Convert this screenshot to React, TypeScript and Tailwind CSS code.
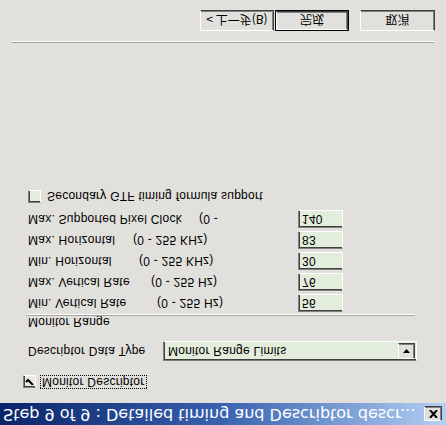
import React from 'react';

const raised =
  'border border-t-white border-l-white border-r-[#404040] border-b-[#404040] shadow-[inset_-1px_-1px_0_#808080]';
const sunken =
  'border border-t-[#808080] border-l-[#808080] border-r-white border-b-white shadow-[inset_1px_1px_0_#404040]';

const rows = [
  { name: 'Min. Vertical Rate', range: '(0 - 255 Hz)', nameW: 'w-[129px]', value: '56' },
  { name: 'Max. Vertical Rate', range: '(0 - 255 Hz)', nameW: 'w-[123px]', value: '76' },
  { name: 'Min. Horizontal', range: '(0 - 255 KHz)', nameW: 'w-[111px]', value: '30' },
  { name: 'Max. Horizontal', range: '(0 - 255 KHz)', nameW: 'w-[105px]', value: '83' },
  { name: 'Max. Supported Pixel Clock', range: '(0 -', nameW: 'w-[171px]', value: '140' },
];

function CheckMark() {
  return (
    <svg width="9" height="7" viewBox="0 0 9 7">
      <path d="M1 3 L3 5 L8 0" stroke="#000" strokeWidth="2" fill="none" />
    </svg>
  );
}

export default function App() {
  // the reference is shown mirrored top-to-bottom, so the whole dialog is flipped
  return (
    <div className="w-[446px] h-[425px] overflow-hidden bg-[#e2e0dc] -scale-y-100 flex flex-col font-['Liberation_Sans',sans-serif] text-[12px] tracking-[0.25px] text-black">
      {/* title bar */}
      <div className="h-[22px] shrink-0 flex items-center bg-linear-to-r from-[#0a246a] via-[#3a62b0] to-[#b4d0f2]">
        <span className="pl-[3px] text-white font-['DejaVu_Sans',sans-serif] text-[16px] tracking-normal leading-none whitespace-nowrap">
          Step 9 of 9 : Detailed timing and Descriptor descr...
        </span>
        <button className={`ml-auto mr-[4px] w-[18px] h-[15px] bg-[#e2e0dc] flex items-center justify-center ${raised}`}>
          <svg width="9" height="8" viewBox="0 0 9 8">
            <path d="M1 0 L8 8 M8 0 L1 8" stroke="#000" strokeWidth="2" />
          </svg>
        </button>
      </div>

      {/* Monitor Descriptor checkbox */}
      <div className="mt-[14px] h-[14px] flex items-center pl-[23px]">
        <div className={`w-[13px] h-[13px] bg-[#eceae6] flex items-center justify-center ${sunken}`}>
          <CheckMark />
        </div>
        <span className="ml-[4px] px-[1px] border border-dotted border-black leading-[12px]">Monitor Descriptor</span>
      </div>

      {/* descriptor data type */}
      <div className="mt-[14px] h-[20px] flex items-center pl-[28px]">
        <span className="w-[135px]">Descriptor Data Type</span>
        <div className={`w-[254px] h-[20px] bg-[#e3eddb] flex items-center ${sunken}`}>
          <span className="pl-[4px] flex-1">Monitor Range Limits</span>
          <div className={`w-[17px] h-[16px] mr-[1px] bg-[#e2e0dc] flex items-center justify-center ${raised}`}>
            <svg width="7" height="4" viewBox="0 0 7 4">
              <path d="M0 0 H7 L3.5 4 Z" fill="#000" />
            </svg>
          </div>
        </div>
      </div>

      {/* Monitor Range */}
      <div className="mt-[13px] h-[12px] pl-[28px] leading-[12px]">Monitor Range</div>
      <div className="ml-[26px] w-[389px] h-[2px] border-t border-t-[#a8a49e] border-b border-b-white" />

      <div className="mt-[2px] flex flex-col gap-[3px]">
        {rows.map((r) => (
          <div key={r.name} className="h-[18px] flex items-center pl-[28px]">
            <span className={`${r.nameW} whitespace-nowrap`}>{r.name}</span>
            <span className="w-[99px] whitespace-nowrap">{r.range}</span>
            <div className={`ml-auto mr-[103px] w-[45px] h-[18px] bg-[#e3eddb] flex items-center pl-[3px] ${sunken}`}>
              {r.value}
            </div>
          </div>
        ))}
      </div>

      {/* Secondary GTF */}
      <div className="mt-[7px] h-[13px] flex items-center pl-[28px]">
        <div className={`w-[13px] h-[13px] bg-[#e3eddb] ${sunken}`} />
        <span className="ml-[6px]">Secondary GTF timing formula support</span>
      </div>

      {/* separator */}
      <div className="mt-[147px] mx-[12px] h-[2px] border-t border-t-[#a09c98] border-b border-b-white" />

      {/* buttons */}
      <div className="mt-[10px] flex justify-end pr-[11px] font-['Noto_Sans_CJK_SC',sans-serif] text-[12px] tracking-normal">
        <button className={`w-[74px] h-[21px] bg-[#e2e0dc] flex items-center justify-center ${raised}`}>
          &lt; 上一步(B)
        </button>
        <div className="ml-[1px] w-[74px] h-[21px] border border-black">
          <button className={`w-full h-full bg-[#e2e0dc] flex items-center justify-center ${raised}`}>完成</button>
        </div>
        <button className={`ml-[11px] w-[75px] h-[21px] bg-[#e2e0dc] flex items-center justify-center ${raised}`}>
          取消
        </button>
      </div>
    </div>
  );
}
